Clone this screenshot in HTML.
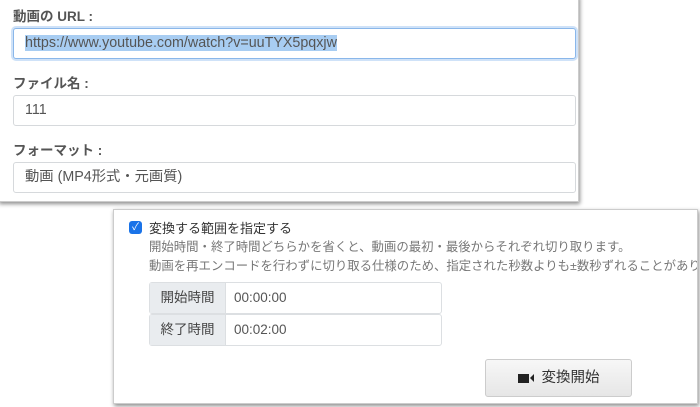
<!DOCTYPE html>
<html><head><meta charset="utf-8"><style>
body{margin:0;width:700px;height:407px;background:#fff;position:relative;overflow:hidden;font-family:"Liberation Sans","Noto Sans CJK JP",sans-serif;color:#444}
.card1{position:absolute;left:-2px;top:-5px;width:579px;height:205px;background:#fff;border:1px solid #ccc;box-shadow:1px 2px 4px rgba(0,0,0,.45)}
.lab{position:absolute;left:13px;font-size:13.5px;font-weight:bold;color:#555}
.inp{position:absolute;left:13px;width:563px;height:31px;border:1px solid #d6d9dc;border-radius:3px;box-sizing:border-box;font-size:14.3px;line-height:29px;padding-left:11px;color:#555;background:#fff}
.card2{position:absolute;left:113px;top:209px;width:583px;height:193px;background:#fff;border:1px solid #ccc;box-shadow:1px 2px 4px rgba(0,0,0,.45);overflow:hidden}
.t{position:absolute;font-size:12.4px;white-space:nowrap}
.row{position:absolute;left:35px;width:293px;height:32px;border:1px solid #dcdfe2;border-radius:3px;box-sizing:border-box;font-size:13.5px;line-height:30px}
.row .h{position:absolute;left:0;top:0;bottom:0;width:75px;background:#e9ecef;border-right:1px solid #dcdfe2;text-align:center;color:#444}
.row .v{position:absolute;left:84px;color:#555}
.btn{position:absolute;left:371px;top:149px;width:147px;height:38px;box-sizing:border-box;border:1px solid #ccc;border-radius:3px;background:linear-gradient(#f7f7f7,#e6e6e6);font-size:14.5px;line-height:36px;text-align:center;color:#333}
</style></head><body>
<div class="card1"></div>
<div class="lab" style="top:5px">動画の URL :</div>
<div class="inp" style="top:28px;border-color:#8ab7ea;box-shadow:0 0 0 2px #cfe2f8"><span style="background:#a8cdf2">https://www.youtube.com/watch?v=uuTYX5pqxjw</span></div>
<div class="lab" style="top:72px">ファイル名 :</div>
<div class="inp" style="top:95px">111</div>
<div class="lab" style="top:139px">フォーマット :</div>
<div class="inp" style="top:162px">動画 (MP4形式・元画質)</div>
<div class="card2">
<div style="position:absolute;left:15px;top:11px;width:13px;height:13px;border-radius:3px;background:#1a73e8;color:#fff;font-size:10px;line-height:13px;text-align:center">✓</div>
<div class="t" style="left:35px;top:8px;color:#333;font-size:13px">変換する範囲を指定する</div>
<div class="t" style="left:35px;top:27px;color:#777">開始時間・終了時間どちらかを省くと、動画の最初・最後からそれぞれ切り取ります。</div>
<div class="t" style="left:35px;top:46px;color:#777">動画を再エンコードを行わずに切り取る仕様のため、指定された秒数よりも±数秒ずれることがあります。</div>
<div class="row" style="top:72px"><div class="h">開始時間</div><div class="v">00:00:00</div></div>
<div class="row" style="top:104px"><div class="h">終了時間</div><div class="v">00:02:00</div></div>
<div class="btn"><span style="display:inline-block;width:11px;height:9px;background:#222;vertical-align:-1px;margin-right:1px"></span><span style="display:inline-block;width:0;height:0;border-top:4px solid transparent;border-bottom:4px solid transparent;border-right:4px solid #222;vertical-align:0;margin-right:8px"></span>変換開始</div>
</div>
</body></html>
